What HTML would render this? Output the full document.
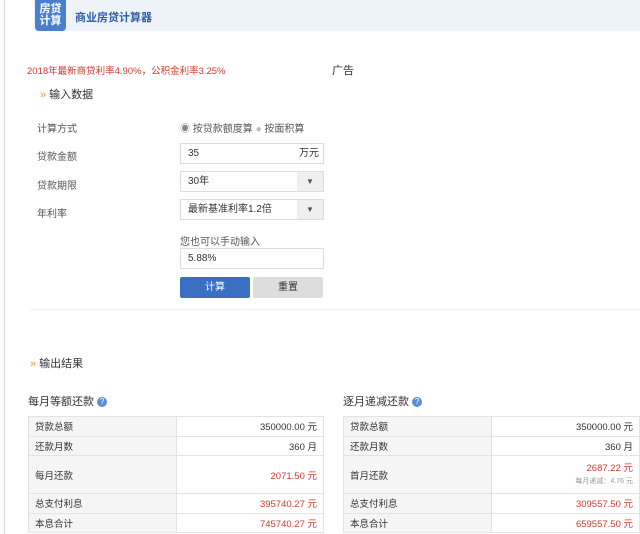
<!DOCTYPE html>
<html><head><meta charset="utf-8"><style>
*{margin:0;padding:0;box-sizing:border-box}
body{width:640px;height:534px;background:#fff;font-family:"Liberation Sans","Noto Sans CJK SC",sans-serif;font-size:10px;color:#333;position:relative;overflow:hidden}
.a{position:absolute}
.vl{left:4px;top:0;width:1px;height:534px;background:#ddd}
.hdr{left:34px;top:0;width:606px;height:31px;background:#eef3fa}
.logo{left:35px;top:0;width:31px;height:31px;background:#4a7fd0;border-radius:0 0 4px 4px;color:#fff;font-size:11px;line-height:12px;text-align:center;padding-top:3px;font-weight:bold}
.inp{border:1px solid #ddd;background:#fff;height:21px;line-height:19px;padding-left:7px;font-size:10px}
.dd{position:absolute;right:0;top:0;width:26px;height:19px;background:#efefef;text-align:center;font-size:8px;color:#555}
.lb{color:#555}
table{border-collapse:collapse;position:absolute;font-size:9.5px}
td{border:1px solid #e3e3e3;padding:0 6px;height:19.5px}
td.l{background:#f5f5f5;width:148px}
td.r{text-align:right}
.red{color:#d0392f}
.q{display:inline-block;width:10px;height:10px;border-radius:50%;background:#5a8ed8;color:#fff;font-size:8px;line-height:10px;text-align:center;vertical-align:1px}
</style></head><body>
<div class="a vl"></div>
<div class="a hdr"></div>
<div class="a logo">房贷<br>计算</div>
<div class="a" style="left:75px;top:9px;font-size:11px;color:#2d5ca8;font-weight:bold">商业房贷计算器</div>
<div class="a red" style="left:27px;top:63px;font-size:9.5px">2018年最新商贷利率4.90%，公积金利率3.25%</div>
<div class="a" style="left:332px;top:62px;font-size:11px">广告</div>
<div class="a" style="left:40px;top:86px;font-size:11px"><span style="color:#e5a21b">»</span> 输入数据</div>
<div class="a lb" style="left:37px;top:120px">计算方式</div>
<div class="a lb" style="left:180px;top:120px"><span style="color:#888">◉</span> 按贷款额度算 <span style="color:#bbb">●</span> 按面积算</div>
<div class="a lb" style="left:37px;top:148px">贷款金额</div>
<div class="a inp" style="left:180px;top:143px;width:144px">35<span style="position:absolute;right:4px">万元</span></div>
<div class="a lb" style="left:37px;top:177px">贷款期限</div>
<div class="a inp" style="left:180px;top:171px;width:144px">30年<span class="dd">▼</span></div>
<div class="a lb" style="left:37px;top:205px">年利率</div>
<div class="a inp" style="left:180px;top:199px;width:144px">最新基准利率1.2倍<span class="dd">▼</span></div>
<div class="a lb" style="left:180px;top:233px">您也可以手动输入</div>
<div class="a inp" style="left:180px;top:248px;width:144px">5.88%</div>
<div class="a" style="left:180px;top:277px;width:70px;height:21px;background:#3b6fc4;border-radius:2px;color:#fff;text-align:center;line-height:21px">计算</div>
<div class="a" style="left:253px;top:277px;width:70px;height:21px;background:#ddd;border-radius:2px;text-align:center;line-height:21px">重置</div>
<div class="a" style="left:30px;top:309px;width:610px;height:1px;background:#f0f0f0"></div>
<div class="a" style="left:30px;top:355px;font-size:11px"><span style="color:#e5a21b">»</span> 输出结果</div>
<div class="a" style="left:28px;top:393px;font-size:11px">每月等额还款 <span class="q">?</span></div>
<div class="a" style="left:343px;top:393px;font-size:11px">逐月递减还款 <span class="q">?</span></div>
<table style="left:28px;top:416px;width:296px">
<tr><td class="l">贷款总额</td><td class="r">350000.00 元</td></tr>
<tr><td class="l">还款月数</td><td class="r">360 月</td></tr>
<tr><td class="l" style="height:38px">每月还款</td><td class="r red">2071.50 元</td></tr>
<tr><td class="l">总支付利息</td><td class="r red">395740.27 元</td></tr>
<tr><td class="l">本息合计</td><td class="r red">745740.27 元</td></tr>
</table>
<table style="left:343px;top:416px;width:297px">
<tr><td class="l">贷款总额</td><td class="r">350000.00 元</td></tr>
<tr><td class="l">还款月数</td><td class="r">360 月</td></tr>
<tr><td class="l" style="height:38px">首月还款</td><td class="r"><span class="red">2687.22 元</span><br><span style="font-size:7px;color:#999;line-height:16px">每月递减：4.76 元</span></td></tr>
<tr><td class="l">总支付利息</td><td class="r red">309557.50 元</td></tr>
<tr><td class="l">本息合计</td><td class="r red">659557.50 元</td></tr>
</table>
</body></html>
